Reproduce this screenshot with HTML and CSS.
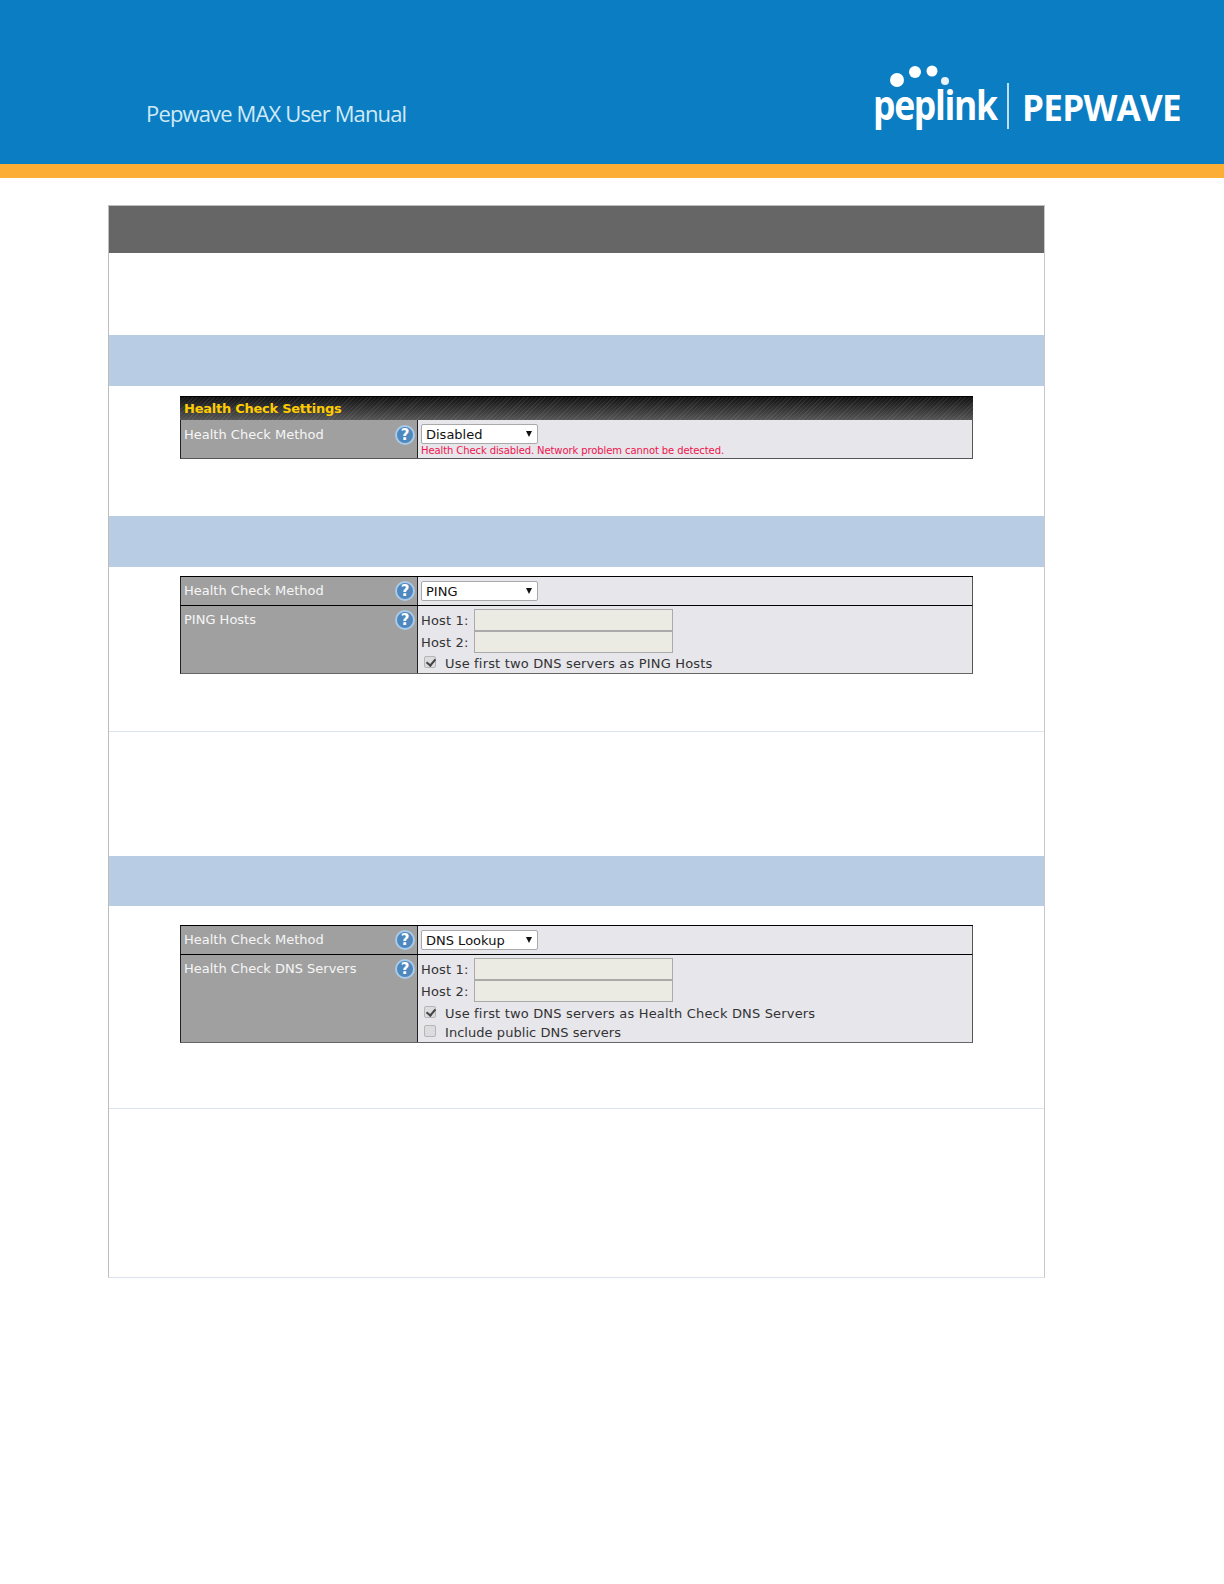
FILE: index.html
```html
<!DOCTYPE html>
<html>
<head>
    <title>Pepwave MAX User Manual</title>
    <link rel="stylesheet" href="styles.css">
</head>
<body>
    <header class="banner">
        <div class="manual-title">Pepwave MAX User Manual</div>
        <div class="logo">
            <div class="peplink">
                <svg class="dots" width="78" height="26" viewBox="0 0 78 26">
                    <circle cx="24" cy="16" r="7" fill="#fff"/>
                    <circle cx="42" cy="8" r="6" fill="#fff"/>
                    <circle cx="59" cy="7" r="5.5" fill="#fff"/>
                    <circle cx="72" cy="17" r="4" fill="#e6f3fa"/>
                </svg>
                <span class="peplink-name">peplink</span>
            </div>
            <div class="logo-rule"></div>
            <div class="pepwave-name">PEPWAVE</div>
        </div>
    </header>
    <div class="stripe"></div>

    <main class="sheet">
        <div class="sheet-head"></div>
        <div class="sheet-intro"></div>

        <div class="band band-tall"></div>
        <section class="shot shot-disabled">
            <div class="panel">
                <div class="panel-title">Health Check Settings</div>
                <div class="row row-disabled">
                    <div class="row-label">Health Check Method <span class="help">?</span></div>
                    <div class="row-value">
                        <div class="select"><span>Disabled</span><i class="caret"></i></div>
                        <div class="warning">Health Check disabled. Network problem cannot be detected.</div>
                    </div>
                </div>
            </div>
        </section>

        <div class="band band-tall"></div>
        <section class="shot shot-ping">
            <div class="panel">
                <div class="row row-method">
                    <div class="row-label">Health Check Method <span class="help">?</span></div>
                    <div class="row-value">
                        <div class="select"><span>PING</span><i class="caret"></i></div>
                    </div>
                </div>
                <div class="row row-last">
                    <div class="row-label">PING Hosts <span class="help">?</span></div>
                    <div class="row-value">
                        <div class="host"><label>Host 1:</label><div class="host-input"></div></div>
                        <div class="host"><label>Host 2:</label><div class="host-input"></div></div>
                        <div class="checks checks-ping">
                            <div class="check"><i class="box checked"></i>Use first two DNS servers as PING Hosts</div>
                        </div>
                    </div>
                </div>
            </div>
        </section>
        <div class="sheet-text sheet-text-ping"></div>

        <div class="band"></div>
        <section class="shot shot-dns">
            <div class="panel">
                <div class="row row-method">
                    <div class="row-label">Health Check Method <span class="help">?</span></div>
                    <div class="row-value">
                        <div class="select"><span>DNS Lookup</span><i class="caret"></i></div>
                    </div>
                </div>
                <div class="row row-last">
                    <div class="row-label">Health Check DNS Servers <span class="help">?</span></div>
                    <div class="row-value">
                        <div class="host"><label>Host 1:</label><div class="host-input"></div></div>
                        <div class="host"><label>Host 2:</label><div class="host-input"></div></div>
                        <div class="checks">
                            <div class="check"><i class="box checked"></i>Use first two DNS servers as Health Check DNS Servers</div>
                            <div class="check check-short"><i class="box"></i>Include public DNS servers</div>
                        </div>
                    </div>
                </div>
            </div>
        </section>
        <div class="sheet-text sheet-text-dns"></div>
    </main>
</body>
</html>
```

FILE: styles.css
```css
* {
    box-sizing: border-box;
}

body {
    margin: 0;
    background: #fff;
    font-family: "DejaVu Sans", sans-serif;
    font-size: 13px;
    color: #333;
}

.banner {
    display: flex;
    justify-content: space-between;
    height: 164px;
    padding: 0 43px 0 146px;
    background: #0b7dc3;
}

.manual-title {
    margin-top: 97px;
    font-family: "Open Sans", sans-serif;
    font-size: 22px;
    line-height: 32px;
    letter-spacing: -0.85px;
    color: #cfeaf6;
}

.logo {
    display: flex;
    align-items: flex-start;
    padding-top: 64px;
    color: #fff;
}

.peplink {
    display: flex;
    flex-direction: column;
    width: 124px;
}

.dots {
    display: block;
}

.peplink-name {
    margin-top: -10px;
    font-family: "Open Sans", sans-serif;
    font-size: 41px;
    font-weight: 700;
    line-height: 48px;
    letter-spacing: -1.5px;
    transform: scaleX(0.865);
    transform-origin: left;
}

.logo-rule {
    width: 2px;
    height: 46px;
    margin: 19px 13px 0 10px;
    background: #bfe0f2;
}

.pepwave-name {
    margin-top: 23px;
    font-family: "Open Sans", sans-serif;
    font-size: 35px;
    font-weight: 700;
    line-height: 42px;
    letter-spacing: -0.7px;
}

.stripe {
    height: 14px;
    background: #fbae33;
}

.sheet {
    width: 937px;
    margin: 27px 0 0 108px;
    border-top: 1px solid #bdbdbd;
    border-left: 1px solid #bdbdbd;
    border-right: 1px solid #c8c8c8;
    border-bottom: 1px solid #dde3ec;
}

.sheet-head {
    height: 47px;
    background: #666;
}

.sheet-intro {
    height: 82px;
}

.band {
    height: 50px;
    background: #b8cce4;
}

.band-tall {
    height: 51px;
}

.shot {
    padding: 9px 71px 0;
}

.shot-disabled {
    height: 130px;
    padding-top: 10px;
}

.shot-ping {
    height: 165px;
    border-bottom: 1px solid #dbe4f1;
}

.shot-dns {
    height: 203px;
    padding-top: 19px;
    border-bottom: 1px solid #dbe4f1;
}

.sheet-text-ping {
    height: 124px;
}

.sheet-text-dns {
    height: 168px;
}

.panel {
    width: 793px;
    border-top: 1px solid #000;
}

.panel-title {
    height: 23px;
    padding-left: 4px;
    font-weight: 700;
    line-height: 23px;
    letter-spacing: -0.25px;
    color: #fc0;
    background:
        repeating-linear-gradient(135deg, rgba(255, 255, 255, 0.07) 0 1px, transparent 1px 3px),
        linear-gradient(#111, #555);
}

.row {
    display: grid;
    grid-template-columns: 237px 1fr;
    border-left: 1px solid #222;
    border-right: 1px solid #555;
    border-bottom: 1px solid #000;
    background: #e6e6eb;
}

.row-disabled {
    height: 39px;
    border-bottom-color: #555;
}

.row-method {
    height: 29px;
}

.row-last {
    border-bottom-color: #666;
}

.row-label {
    position: relative;
    padding: 5px 0 0 3px;
    line-height: 18px;
    color: #f6f6f6;
    background: #a0a0a0;
    border-right: 1px solid #222;
}

.row-disabled .row-label {
    padding-top: 6px;
}

.help {
    position: absolute;
    top: 4px;
    right: 2px;
    width: 20px;
    height: 20px;
    border: 2px solid #a9cbe8;
    border-radius: 50%;
    font-size: 15px;
    font-weight: 700;
    line-height: 16px;
    text-align: center;
    color: #fff;
    background: #4f87bf;
}

.row-disabled .help {
    top: 5px;
}

.row-value {
    padding: 4px 0 0 3px;
    letter-spacing: 0.17px;
}

.row-last .row-value {
    padding-top: 3px;
}

.select {
    display: flex;
    align-items: center;
    justify-content: space-between;
    width: 117px;
    height: 20px;
    padding: 0 5px 0 4px;
    border: 1px solid #a9a9a9;
    border-radius: 2px;
    letter-spacing: 0;
    color: #111;
    background: #fff;
}

.caret {
    width: 0;
    height: 0;
    margin-top: -1px;
    border-left: 3px solid transparent;
    border-right: 3px solid transparent;
    border-top: 6px solid #111;
}

.warning {
    font-size: 10px;
    line-height: 13px;
    letter-spacing: -0.1px;
    color: #f0134d;
}

.host {
    display: flex;
    align-items: center;
    height: 22px;
}

.host label {
    width: 53px;
}

.host-input {
    width: 199px;
    height: 22px;
    border: 1px solid #aaa;
    background: #ebebe4;
}

.checks {
    padding-top: 2px;
}

.checks-ping {
    padding-top: 1px;
}

.check {
    display: flex;
    align-items: center;
    height: 19px;
    padding-left: 3px;
}

.check-short {
    letter-spacing: 0.05px;
}

.box {
    position: relative;
    width: 12px;
    height: 12px;
    margin: -4px 9px 0 0;
    border: 1px solid #b5b5b5;
    border-radius: 2px;
    background: #dcdce0;
}

.box.checked::after {
    content: "";
    position: absolute;
    left: 3px;
    top: 0;
    width: 4px;
    height: 7px;
    border: solid #444;
    border-width: 0 2px 2px 0;
    transform: rotate(40deg);
}
```
